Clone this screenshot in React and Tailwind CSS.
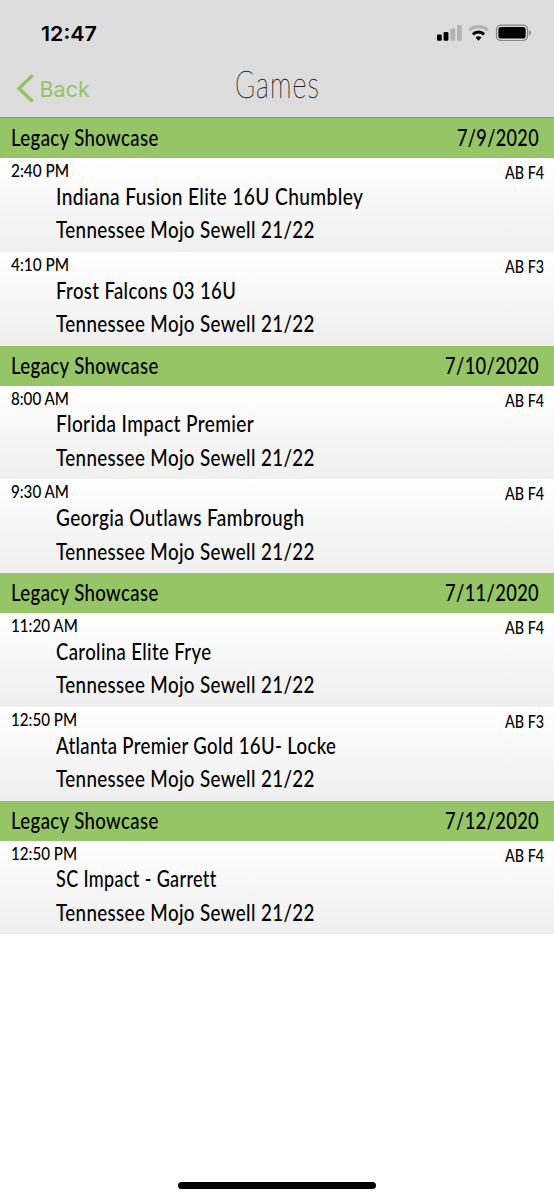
import React, { useLayoutEffect, useRef, useState } from 'react';

const days = [
  {
    event: 'Legacy Showcase',
    date: '7/9/2020',
    dateWidth: 82,
    games: [
      { time: '2:40 PM', timeWidth: 58, field: 'AB F4', team: 'Indiana Fusion Elite 16U Chumbley', teamWidth: 307 },
      { time: '4:10 PM', timeWidth: 58, field: 'AB F3', team: 'Frost Falcons 03 16U', teamWidth: 180 },
    ],
  },
  {
    event: 'Legacy Showcase',
    date: '7/10/2020',
    dateWidth: 94,
    games: [
      { time: '8:00 AM', timeWidth: 58, field: 'AB F4', team: 'Florida Impact Premier', teamWidth: 198 },
      { time: '9:30 AM', timeWidth: 58, field: 'AB F4', team: 'Georgia Outlaws Fambrough', teamWidth: 248.5 },
    ],
  },
  {
    event: 'Legacy Showcase',
    date: '7/11/2020',
    dateWidth: 94,
    games: [
      { time: '11:20 AM', timeWidth: 66.5, field: 'AB F4', team: 'Carolina Elite Frye', teamWidth: 155.5 },
      { time: '12:50 PM', timeWidth: 66.5, field: 'AB F3', team: 'Atlanta Premier Gold 16U- Locke', teamWidth: 280 },
    ],
  },
  {
    event: 'Legacy Showcase',
    date: '7/12/2020',
    dateWidth: 94,
    games: [
      { time: '12:50 PM', timeWidth: 66.5, field: 'AB F4', team: 'SC Impact - Garrett', teamWidth: 161 },
    ],
  },
];

// Condenses a label horizontally so that it takes exactly `width` pixels
function Condensed({ width, children }) {
  const ref = useRef(null);
  const [scale, setScale] = useState(1);

  useLayoutEffect(() => {
    setScale(width / ref.current.offsetWidth);
  }, [width, children]);

  return (
    <span className="block overflow-visible" style={{ width }}>
      <span
        ref={ref}
        className="inline-block origin-left whitespace-pre"
        style={{ transform: `scaleX(${scale})` }}
      >
        {children}
      </span>
    </span>
  );
}

function StatusIcons() {
  return (
    <svg className="w-[96px] h-[18px]" viewBox="0 0 96 18" fill="none">
      {/* Signal */}
      <rect x="1" y="10.5" width="4.8" height="6.2" rx="1.2" fill="#000" />
      <rect x="7.6" y="8" width="4.8" height="8.7" rx="1.2" fill="#000" />
      <rect x="14.4" y="4.5" width="4.8" height="12.2" rx="1.2" fill="#b3b3b3" />
      <rect x="21" y="1" width="4.8" height="15.7" rx="1.2" fill="#b3b3b3" />
      {/* Wifi */}
      <path d="M33.2 6.3a13.5 13.5 0 0 1 18.6 0" stroke="#b3b3b3" strokeWidth="3.2" />
      <path d="M36.9 10.3a8.2 8.2 0 0 1 11.2 0" stroke="#000" strokeWidth="3" />
      <path d="M39.6 13.5a4.3 4.3 0 0 1 5.8 0L42.5 16.7z" fill="#000" />
      {/* Battery */}
      <rect x="60.5" y="1.1" width="31" height="15.4" rx="4.4" stroke="#858585" strokeWidth="1.2" />
      <rect x="62.4" y="3" width="27.2" height="11.6" rx="2.6" fill="#000" />
      <path d="M93 6.2c2.6.9 2.6 4.4 0 5.3z" fill="#858585" />
    </svg>
  );
}

function DayHeader({ day }) {
  return (
    <div className="h-[40px] pl-[11px] pr-[15.5px] flex justify-between bg-[#95c566] text-[23.5px] leading-[38.5px] tracking-[0.02em]">
      <Condensed width={148}>{day.event}</Condensed>
      <Condensed width={day.dateWidth}>{day.date}</Condensed>
    </div>
  );
}

function GameRow({ game }) {
  return (
    <div className="h-[93.75px] flex justify-between bg-linear-to-b from-white to-[#efefef]">
      <div>
        <div className="h-[21.75px] pl-[10.5px] text-[17.8px] leading-[24.5px]">
          <Condensed width={game.timeWidth}>{game.time}</Condensed>
        </div>
        <div className="pl-[55.5px] text-[23.5px] leading-[33.5px] tracking-[0.02em]">
          <Condensed width={game.teamWidth}>{game.team}</Condensed>
          <Condensed width={258.5}>Tennessee Mojo Sewell 21/22</Condensed>
        </div>
      </div>
      <div className="pr-[9.5px] text-[17.8px] leading-[29.5px]">
        <Condensed width={39.5}>{game.field}</Condensed>
      </div>
    </div>
  );
}

export default function App() {
  return (
    <div className="w-full h-[1200px] flex flex-col bg-white text-black font-medium font-['Lato',sans-serif]">
      <header className="h-[118px] shrink-0 bg-[#dddddd] border-b border-[#7fa05f]">
        <div className="h-[56px] pl-[41px] pr-[22px] pt-[24px] flex justify-between items-start">
          <span className="text-[20.3px] leading-[20px] font-semibold font-['Inter',sans-serif]">
            <Condensed width={56}>12:47</Condensed>
          </span>
          <StatusIcons />
        </div>
        <div className="h-[61px] grid grid-cols-[1fr_auto_1fr]">
          <button className="pl-[16px] pt-[18px] flex items-start text-[#94c563]">
            <svg className="w-[19px] h-[29px]" viewBox="0 0 19 29" fill="none">
              <path d="M15.6 2.2L3 14.4L15.6 26.6" stroke="currentColor" strokeWidth="3.5" strokeLinecap="round" />
            </svg>
            <span className="pl-[4.5px] text-[21.5px] leading-[30px] font-normal font-['Inter',sans-serif]">
              <Condensed width={50}>Back</Condensed>
            </span>
          </button>
          <h1 className="text-[38px] leading-[54px] font-thin text-[#222222] tracking-[0.04em] [-webkit-text-stroke:0.45px_#222222]">
            <Condensed width={85}>Games</Condensed>
          </h1>
          <div />
        </div>
      </header>

      <main className="flex-1">
        {days.map((day) => (
          <section key={day.date}>
            <DayHeader day={day} />
            {day.games.map((game) => (
              <GameRow key={game.time} game={game} />
            ))}
          </section>
        ))}
      </main>

      <footer className="pb-[11px] flex justify-center">
        <div className="w-[198px] h-[7px] rounded-full bg-black" />
      </footer>
    </div>
  );
}
